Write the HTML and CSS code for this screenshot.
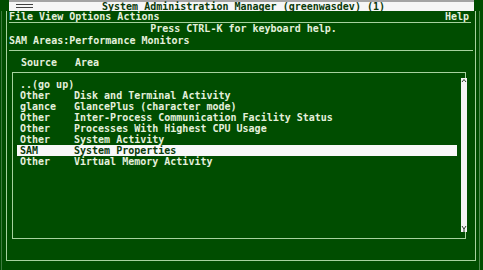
FILE: index.html
```html
<!DOCTYPE html>
<html>
<head>
<meta charset="utf-8">
<link rel="stylesheet" href="styles.css">
</head>
<body>
<div class="titlebar">
  <svg class="grip" width="17" height="9" viewBox="0 0 17 9"><rect x="0" y="2" width="17" height="1" fill="#404040"/><rect x="0" y="5" width="17" height="1" fill="#404040"/></svg>
  <div class="title">System Administration Manager (greenwasdev) (1)</div>
  <div class="spacer"></div>
</div>
<div class="window">
  <div class="frame">
    <div class="menubar">
      <span class="menus">File View Options Actions</span>
      <span class="help">Help</span>
    </div>
    <div class="hint">Press CTRL-K for keyboard help.</div>
    <div class="crumb">SAM Areas:Performance Monitors</div>
    <div class="sep"></div>
    <div class="head"><span class="c1">Source</span><span>Area</span></div>
    <div class="listbox">
      <div class="row"><span class="c1">..(go up)</span></div>
      <div class="row"><span class="c1">Other</span><span>Disk and Terminal Activity</span></div>
      <div class="row"><span class="c1">glance</span><span>GlancePlus (character mode)</span></div>
      <div class="row"><span class="c1">Other</span><span>Inter-Process Communication Facility Status</span></div>
      <div class="row"><span class="c1">Other</span><span>Processes With Highest CPU Usage</span></div>
      <div class="row"><span class="c1">Other</span><span>System Activity</span></div>
      <div class="row sel"><span class="c1">SAM</span><span>System Properties</span></div>
      <div class="row"><span class="c1">Other</span><span>Virtual Memory Activity</span></div>
      <div class="scroll">
        <svg width="6" height="6" viewBox="0 0 6 6"><path d="M1 4 L3 1.5 L5 4" stroke="#2a3a2a" stroke-width="1" fill="none"/></svg>
        <svg width="6" height="7" viewBox="0 0 6 7"><path d="M1 1 L3 4 L5 1 M3 4 L3 7" stroke="#2a3a2a" stroke-width="1" fill="none"/></svg>
      </div>
    </div>
  </div>
</div>
</body>
</html>
```
FILE: styles.css
```css
html, body {
  margin: 0;
  padding: 0;
}
body {
  width: 483px;
  height: 270px;
  overflow: hidden;
  background: #004d00;
  color: #e4f0dc;
  font-family: "DejaVu Sans Mono", "Liberation Mono", monospace;
  font-weight: bold;
  font-size: 10px;
  line-height: 11px;
}
.titlebar {
  margin-left: 9px;
  width: 465px;
  height: 9px;
  border-top: 2px solid #a4a4a4;
  background: #f6f6f6;
  color: #0a3a0a;
  display: flex;
  align-items: center;
  line-height: 9px;
}
.grip {
  margin-left: 7px;
  flex: none;
}
.title {
  flex: 1;
  text-align: center;
  white-space: pre;
}
.spacer {
  width: 20px;
  flex: none;
}
.window {
  margin-left: 1px;
  width: 477px;
  height: 259px;
  border-left: 1px solid #3f7a3f;
  border-right: 1px solid #4f8a4f;
}
.frame {
  margin-left: 4px;
  width: 468px;
  height: 249px;
  border-left: 1px solid #a6d29e;
  border-right: 1px solid #a6d29e;
  border-bottom: 1px solid #a6d29e;
}
.menubar {
  height: 11px;
  margin-left: 2px;
  margin-right: 4px;
  border-bottom: 1px solid #a6d29e;
  display: flex;
  justify-content: space-between;
  align-items: flex-end;
  line-height: 10px;
}
.menus, .help {
  white-space: pre;
}
.help {
  margin-right: 2px;
}
.hint {
  text-align: center;
  line-height: 12px;
  padding-left: 5px;
  white-space: pre;
}
.crumb {
  padding-left: 2px;
  line-height: 12px;
  white-space: pre;
}
.sep {
  margin: 3px 2px 0 2px;
  border-top: 1px solid #a6d29e;
}
.head {
  margin-top: 6px;
  padding-left: 14px;
  display: flex;
  white-space: pre;
}
.c1 {
  width: 54px;
  flex: none;
  white-space: pre;
}
.listbox {
  position: relative;
  box-sizing: border-box;
  margin-top: 4px;
  margin-left: 5px;
  width: 454px;
  height: 167px;
  padding-top: 6px;
  border: 1px solid #a6d29e;
}
.row {
  display: flex;
  height: 11px;
  margin-left: 4px;
  margin-right: 8px;
  padding-left: 3px;
  white-space: pre;
}
.row.sel {
  background: #f8f8f8;
  color: #0a3a0a;
}
.scroll {
  position: absolute;
  right: -2px;
  top: 5px;
  bottom: 6px;
  width: 6px;
  background: #f4f4f4;
  display: flex;
  flex-direction: column;
  justify-content: space-between;
}
.scroll svg {
  display: block;
}
```
